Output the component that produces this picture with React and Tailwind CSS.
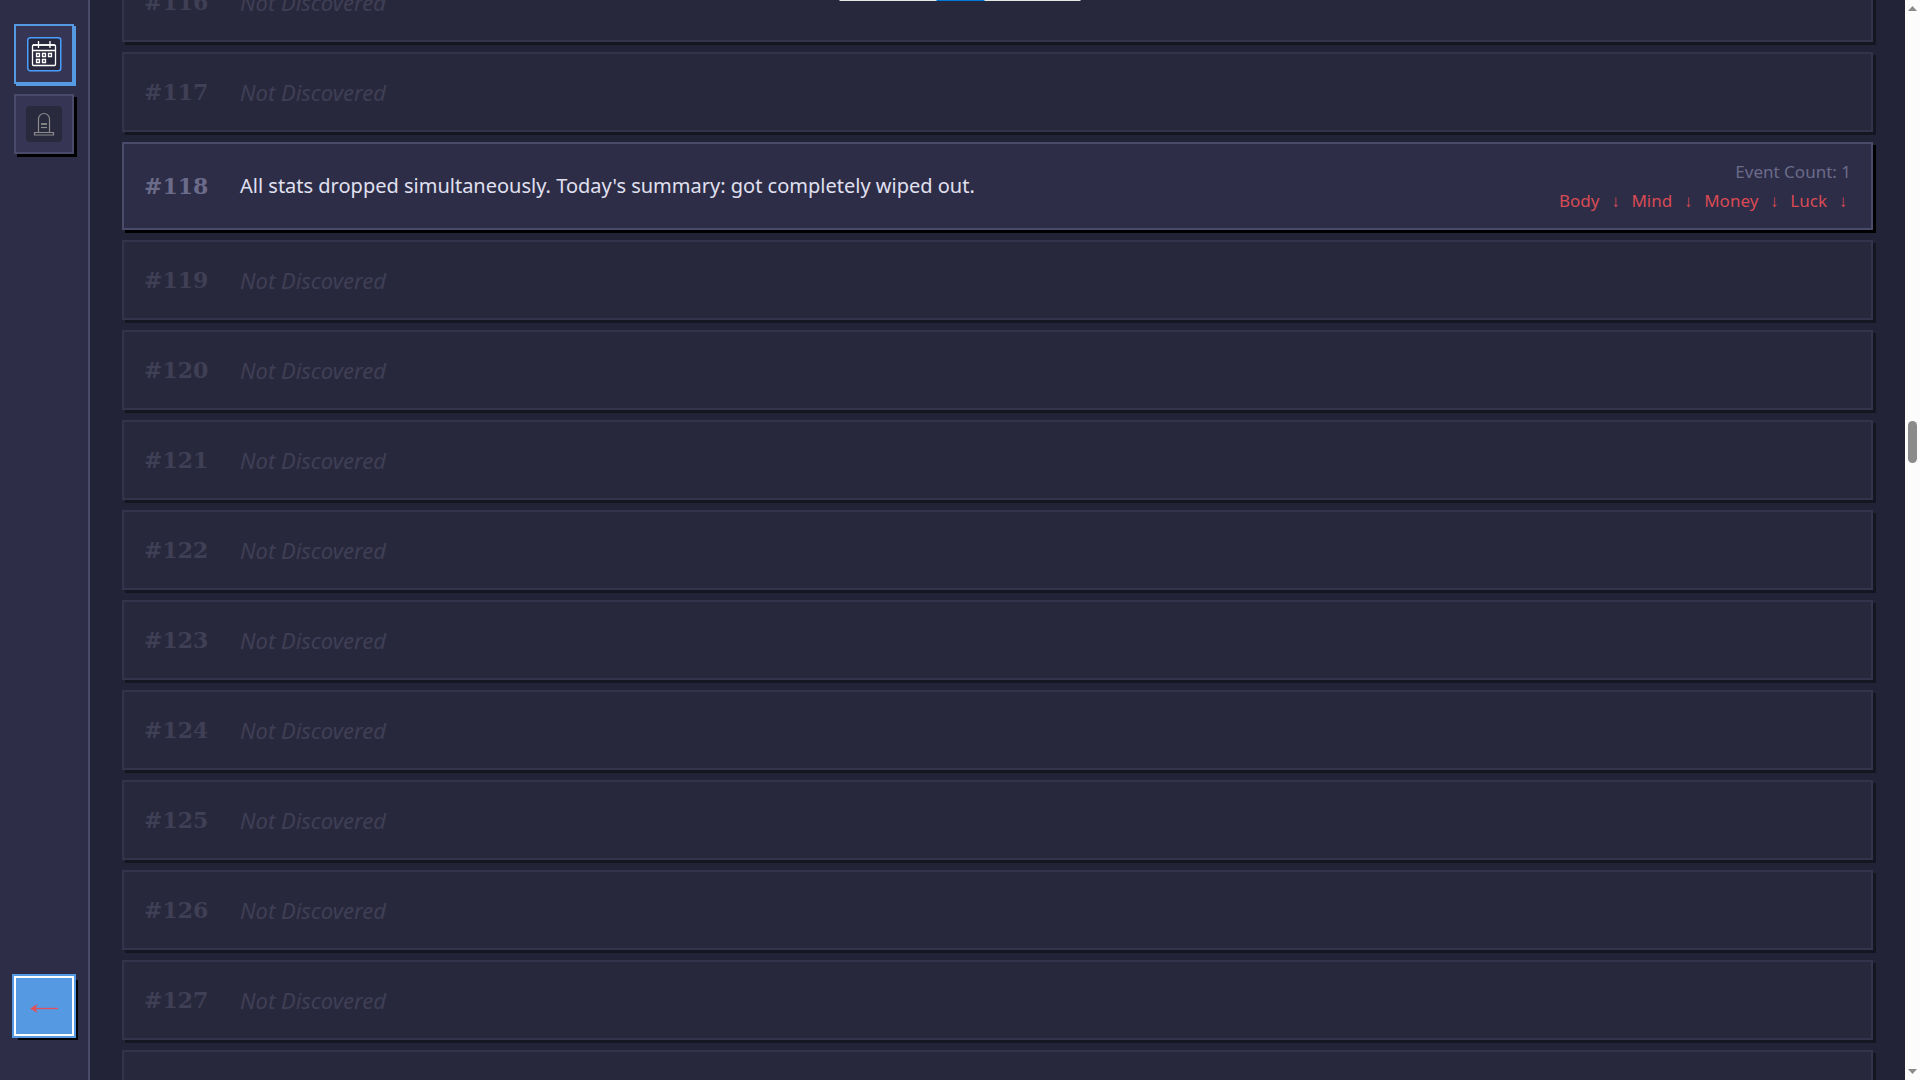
const undiscovered = (id) => ({ id });
const events = [
  undiscovered(116),
  undiscovered(117),
  {
    id: 118,
    text: "All stats dropped simultaneously. Today's summary: got completely wiped out.",
    count: 1,
    drops: ["Body", "Mind", "Money", "Luck"],
  },
  ...[119, 120, 121, 122, 123, 124, 125, 126, 127, 128].map(undiscovered),
];

function CalendarIcon() {
  return (
    <svg viewBox="0 0 36 36" className="size-9" aria-hidden="true">
      <rect x="1.75" y="1.75" width="33" height="33" rx="2.5" fill="#28283d" stroke="#4a9eff" strokeWidth="1.5" />
      <g fill="none" stroke="#ffffff" strokeWidth="1.3">
        <rect x="6.5" y="9" width="23" height="20.5" rx="1" />
        <path d="M12.5 5v7M24 5v7M6 14.5h24M7 9h22" />
        <path d="M10.5 17.500h3v3h-3zM16.500 17.500h3v3h-3zM22.500 17.500h3v3h-3zM10.500 23.500h3v3h-3zM16.500 23.500h3v3h-3z" />
      </g>
    </svg>
  );
}

function TombIcon() {
  return (
    <svg viewBox="0 0 36 36" className="size-9" aria-hidden="true">
      <rect width="36" height="36" rx="4" fill="#2a2a3e" />
      <g fill="none" stroke="#8c8c8c" strokeWidth="1.2">
        <path d="M12.500 26V13a5.500 5.500 0 0 1 11 0v13" />
        <path d="M8.500 26.500h19v2.500h-19z" />
        <path d="M15 18h6" strokeWidth="1.800" />
        <path d="M15 21.500h6" />
      </g>
    </svg>
  );
}

function EventRow({ event }) {
  const found = Boolean(event.text);
  return (
    <li
      className={
        found
          ? "flex min-h-20 items-center border-2 border-[#4a4a6a] bg-[#2d2d47] px-5 py-[13px] shadow-[3px_3px_0_#000]"
          : "flex min-h-20 items-center border-2 border-[#33334b] bg-[#28283d] px-5 py-[13px] shadow-[3px_3px_0_#161623]"
      }
    >
      <span
        className={
          found
            ? "w-24 shrink-0 font-['DejaVu_Serif',serif] text-[22px] leading-6 font-bold text-[#6b6b8a]"
            : "w-24 shrink-0 font-['DejaVu_Serif',serif] text-[22px] leading-6 font-bold text-[#3f3f55]"
        }
      >
        #{event.id}
      </span>
      <p
        className={
          found
            ? "flex-1 text-xl text-[#e0e0f0]"
            : "flex-1 text-[22px] leading-7 text-[#3f3f55] italic"
        }
      >
        {found ? event.text : "Not Discovered"}
      </p>
      {found && (
        <div className="flex flex-col items-end text-[17px] leading-[29px]">
          <span className="text-[#6b6b8a]">Event Count: {event.count}</span>
          <span className="flex gap-2 text-[#d94a54]">
            {event.drops.map((stat) => (
              <span key={stat} className="flex gap-2">
                {stat} <span className="w-4 text-center">↓</span>
              </span>
            ))}
          </span>
        </div>
      )}
    </li>
  );
}

export default function App() {
  return (
    <div className="flex h-screen overflow-hidden bg-[#232338] font-['Noto_Sans',sans-serif]">
      <nav className="flex w-[90px] shrink-0 flex-col border-r-2 border-[#4a4a6a] bg-[#2d2d47] pt-6 pb-11 pl-3.5">
        <button
          type="button"
          aria-label="Events"
          className="flex size-15 items-center justify-center border-2 border-[#5599e2] bg-[#363654] shadow-[2px_2px_0_#5599e2]"
        >
          <CalendarIcon />
        </button>
        <button
          type="button"
          aria-label="Endings"
          className="mt-2.5 flex size-15 items-center justify-center border-2 border-[#4a4a6a] bg-[#363654] shadow-[3px_3px_0_#000]"
        >
          <TombIcon />
        </button>
        <button
          type="button"
          aria-label="Back"
          className="mt-auto flex size-15 items-center justify-center border-2 border-white bg-[#5599e2] shadow-[0_0_0_2px_#5599e2,4px_4px_0_0_#000]"
        >
          <svg viewBox="0 0 28 16" className="h-4 w-7" aria-hidden="true">
            <path d="M4 10.500h24" stroke="#e2505a" strokeWidth="1.300" />
            <path d="M0 10.500L7.500 6l-2 4.500 2 4.500z" fill="#e2505a" />
          </svg>
        </button>
      </nav>
      <main className="min-w-0 flex-1 overflow-hidden px-8">
        <ul className="-mt-[38px] flex flex-col gap-2.5">
          {events.map((event) => (
            <EventRow key={event.id} event={event} />
          ))}
        </ul>
      </main>
      <div className="flex w-[15px] shrink-0 flex-col items-center bg-[#fcfcfc] py-1.5" aria-hidden="true">
        <svg viewBox="0 0 9 5" className="h-[5px] w-[9px]" fill="#8b8b8b">
          <path d="M4.500 0L9 5H0z" />
        </svg>
        <div className="mt-[410px] h-[42px] w-[9px] rounded-full bg-[#8b8b8b]" />
        <svg viewBox="0 0 9 5" className="mt-auto h-[5px] w-[9px]" fill="#8b8b8b">
          <path d="M0 0h9L4.500 5z" />
        </svg>
      </div>
      <div
        className="absolute top-0 left-1/2 flex h-px w-[241px] -translate-x-1/2 justify-center bg-[#e3e8e3]"
        aria-hidden="true"
      >
        <div className="w-12 bg-[#0078d7]" />
      </div>
    </div>
  );
}
